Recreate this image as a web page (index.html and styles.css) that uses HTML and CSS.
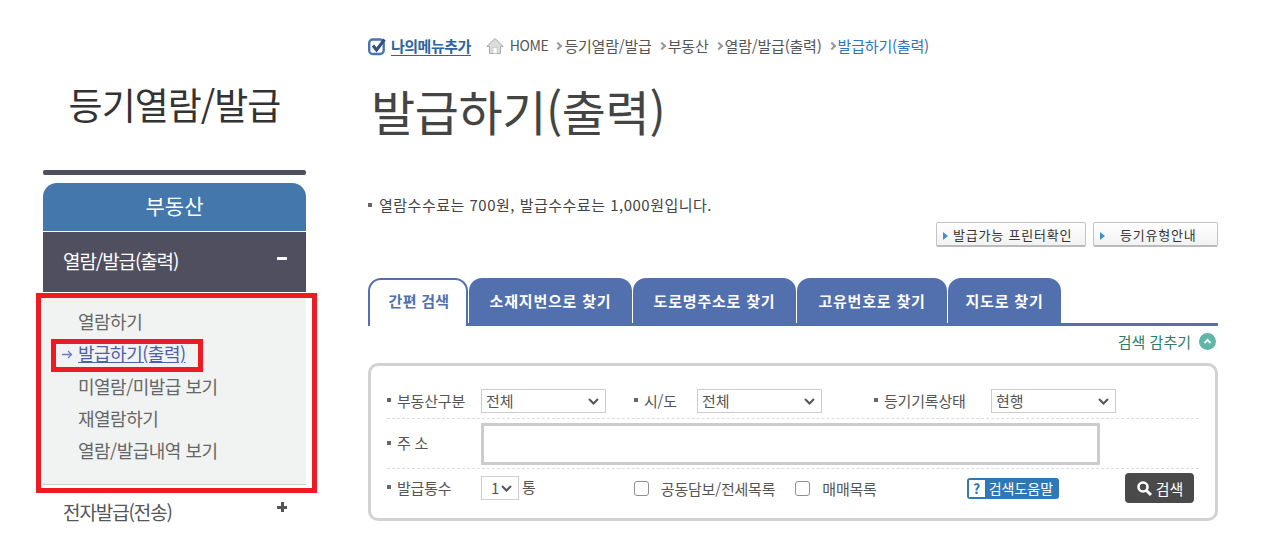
FILE: index.html
```html
<!DOCTYPE html>
<html lang="ko">
<head>
    <meta charset="UTF-8">
    <meta name="viewport" content="width=device-width, initial-scale=1.0">
    <title>발급하기(출력)</title>
    <link rel="stylesheet" href="styles.css">
</head>
<body>
    <div class="wrap">
        <div class="side">
            <h2 class="sideTitle">등기열람/발급</h2>
            <div class="sideBar"></div>
            <div class="sideHead">부동산</div>
            <div class="sideMenu">
                <span>열람/발급(출력)</span>
                <span class="minus"></span>
            </div>
            <ul class="subMenu">
                <li>열람하기</li>
                <li class="on">
                    <svg class="arrow" width="11" height="9" viewBox="0 0 11 9">
                        <path d="M0 4.500h9.500M6 1l3.500 3.500L6 8" fill="none" stroke="#6c7cc0" stroke-width="1.300"/>
                    </svg>
                    <a href="#">발급하기(출력)</a>
                </li>
                <li>미열람/미발급 보기</li>
                <li>재열람하기</li>
                <li>열람/발급내역 보기</li>
            </ul>
            <div class="sideNext">
                <span>전자발급(전송)</span>
                <span class="plus"></span>
            </div>
            <div class="redBox outer"></div>
            <div class="redBox inner"></div>
        </div>

        <div class="main">
            <div class="crumbs">
                <a class="myMenu" href="#">
                    <svg width="19" height="19" viewBox="0 0 19 19">
                        <rect x="1.200" y="2.500" width="14.500" height="14.500" rx="3.500" fill="#fff" stroke="#4a76b0" stroke-width="2.400"/>
                        <path d="M5 8.500l3.500 4.500L16.500 2.500" fill="none" stroke="#2f4f8a" stroke-width="3"/>
                    </svg>
                    <span>나의메뉴추가</span>
                </a>
                <svg class="home" width="18" height="18" viewBox="0 0 18 18">
                    <path d="M.8 9.500L9 1.500l8.200 8h-2.700v7h-11v-7z" fill="#dcdcdc" stroke="#a9a9a9"/>
                    <rect x="7" y="10.500" width="4" height="6" fill="#fff" stroke="#b5b5b5" stroke-width="0.500"/>
                </svg>
                <span class="crumb homeText">HOME</span>
                <span class="gt"></span><span class="crumb">등기열람/발급</span>
                <span class="gt"></span><span class="crumb">부동산</span>
                <span class="gt"></span><span class="crumb">열람/발급(출력)</span>
                <span class="gt"></span><span class="crumb now">발급하기(출력)</span>
            </div>

            <h1 class="pageTitle">발급하기(출력)</h1>

            <p class="notice"><span class="dot"></span>열람수수료는 700원, 발급수수료는 1,000원입니다.</p>

            <div class="btnRow">
                <button class="smallBtn first"><span class="tri"></span>발급가능 프린터확인</button>
                <button class="smallBtn second"><span class="tri"></span>등기유형안내</button>
            </div>

            <div class="tabs">
                <div class="tab active">간편 검색</div>
                <div class="tab t2">소재지번으로 찾기</div>
                <div class="tab t2">도로명주소로 찾기</div>
                <div class="tab t3">고유번호로 찾기</div>
                <div class="tab t4">지도로 찾기</div>
            </div>

            <div class="hideRow">
                <span>검색 감추기</span>
                <span class="upBtn">
                    <svg width="17" height="17" viewBox="0 0 17 17">
                        <circle cx="8.500" cy="8.500" r="8.500" fill="#5fb6a6"/>
                        <path d="M5.500 10l3-3 3 3" fill="none" stroke="#fff" stroke-width="2"/>
                    </svg>
                </span>
            </div>

            <div class="searchBox">
                <div class="row row1">
                    <label class="lbl l1"><span class="dot"></span>부동산구분</label>
                    <select class="sel big"><option>전체</option></select>
                    <label class="lbl l2"><span class="dot"></span>시/도</label>
                    <select class="sel big"><option>전체</option></select>
                    <label class="lbl l3"><span class="dot"></span>등기기록상태</label>
                    <select class="sel big"><option>현행</option></select>
                </div>
                <div class="row row2">
                    <label class="lbl l1"><span class="dot"></span>주 소</label>
                    <input class="addr" type="text">
                </div>
                <div class="row row3">
                    <label class="lbl l1"><span class="dot"></span>발급통수</label>
                    <select class="sel tiny"><option>1</option></select>
                    <span class="unit">통</span>
                    <label class="chk c1"><input type="checkbox"><span>공동담보/전세목록</span></label>
                    <label class="chk c2"><input type="checkbox"><span>매매목록</span></label>
                    <span class="help"><b>?</b>검색도움말</span>
                    <button class="searchBtn">
                        <svg width="17" height="17" viewBox="0 0 17 17">
                            <circle cx="7" cy="7" r="4.500" fill="none" stroke="#fff" stroke-width="2.600"/>
                            <path d="M10.500 10.500l4.500 4.500" stroke="#fff" stroke-width="3"/>
                        </svg>
                        검색
                    </button>
                </div>
            </div>
        </div>
    </div>
</body>
</html>
```

FILE: styles.css
```css
* {
    box-sizing: border-box;
    margin: 0;
    padding: 0;
}

html, body {
    height: 535px;
    overflow: hidden;
}

body {
    background-color: white;
    font-family: "Noto Sans CJK KR", "Noto Sans", sans-serif;
    color: #555;
}

.wrap {
    display: flex;
    padding-left: 43px;
}

/* left side */
.side {
    position: relative;
    width: 263px;
    margin-right: 62px;
    flex-shrink: 0;
}

.sideTitle {
    height: 170px;
    padding-top: 77px;
    text-align: center;
    font-size: 37px;
    line-height: 54px;
    font-weight: normal;
    color: #333;
    letter-spacing: -1px;
    white-space: nowrap;
}

.sideBar {
    height: 5px;
    background-color: #504f60;
    border-radius: 2px;
}

.sideHead {
    height: 48px;
    margin-top: 8px;
    background-color: #4477ab;
    border-radius: 14px 14px 0 0;
    color: white;
    text-align: center;
    font-size: 21px;
    line-height: 44px;
}

.sideMenu {
    height: 60px;
    margin-top: 1px;
    padding: 0 19px 3px 20px;
    background-color: #504f60;
    color: white;
    display: flex;
    justify-content: space-between;
    align-items: center;
    font-size: 19px;
    letter-spacing: -1.1px;
}

.minus {
    width: 10px;
    height: 3px;
    margin-bottom: 4px;
    background-color: white;
}

.subMenu {
    height: 192px;
    margin-top: 1px;
    padding-top: 12px;
    list-style: none;
    background-color: #f1f3f2;
    border-bottom: 1px solid #ccc;
}

.subMenu li {
    height: 32.250px;
    padding-left: 35px;
    font-size: 18px;
    line-height: 32px;
    color: #666;
    letter-spacing: -0.5px;
    position: relative;
}

.subMenu .on a {
    color: #4f5fa8;
}

.arrow {
    position: absolute;
    left: 19px;
    top: 13px;
}

.sideNext {
    padding: 12px 19px 0 20px;
    display: flex;
    justify-content: space-between;
    font-size: 19px;
    line-height: 30px;
    letter-spacing: -1.1px;
    color: #555;
}

/* plus sign drawn from two bars */
.plus {
    width: 10px;
    height: 10px;
    margin-top: 5px;
    background:
        linear-gradient(#555, #555) center / 10px 3px no-repeat,
        linear-gradient(#555, #555) center / 3px 10px no-repeat;
}

.redBox {
    position: absolute;
    border: 5px solid #ed1c24;
}

.outer {
    left: -7px;
    top: 293px;
    width: 281px;
    height: 200px;
}

.inner {
    left: 8px;
    top: 339px;
    width: 152px;
    height: 33px;
}

/* main */
.main {
    width: 850px;
    flex-shrink: 0;
}

.crumbs {
    display: flex;
    align-items: center;
    height: 40px;
    margin-top: 26px;
    font-size: 15px;
    color: #555;
    letter-spacing: -0.2px;
}

.crumb {
    padding-bottom: 2px;
}

.myMenu {
    display: flex;
    align-items: center;
    gap: 4px;
    margin-right: 15px;
    color: #2f64a0;
    font-weight: bold;
    text-decoration: none;
    letter-spacing: -0.5px;
}

.myMenu span {
    border-bottom: 1px solid #2f64a0;
    line-height: 19px;
}

.home {
    margin-right: 6px;
}

.homeText {
    font-size: 14px;
    letter-spacing: -0.4px;
}

.gt {
    width: 6px;
    height: 6px;
    margin: 0 3px 0 7px;
    border-top: 2px solid #999;
    border-right: 2px solid #999;
    transform: rotate(45deg);
}

.now {
    color: #2f74c0;
}

.pageTitle {
    height: 90px;
    padding-left: 3px;
    font-size: 48px;
    line-height: 88px;
    font-weight: normal;
    color: #444;
    letter-spacing: -0.4px;
}

.notice {
    margin-top: 37px;
    height: 24px;
    font-size: 15px;
    line-height: 24px;
    color: #444;
    letter-spacing: 0.5px;
    display: flex;
    align-items: center;
}

.dot {
    display: inline-block;
    width: 4px;
    height: 4px;
    margin-right: 6px;
    background-color: #666;
    flex-shrink: 0;
}

.notice .dot {
    margin-right: 7px;
}

.btnRow {
    display: flex;
    justify-content: flex-end;
    gap: 7px;
    margin-top: 5px;
}

.smallBtn {
    height: 25px;
    border: 1px solid #c4c4c4;
    border-bottom: 2px solid #bbb;
    border-radius: 2px;
    background: linear-gradient(white, #f2f2f2);
    font-family: inherit;
    font-size: 13px;
    color: #333;
    text-align: left;
    letter-spacing: 0.8px;
}

.first {
    width: 150px;
    padding-left: 6px;
}

.second {
    width: 125px;
    padding-left: 6px;
}

.second .tri {
    margin-right: 15px;
}

.tri {
    display: inline-block;
    width: 0;
    height: 0;
    margin-right: 5px;
    border-left: 5px solid #3f8fd0;
    border-top: 4px solid transparent;
    border-bottom: 4px solid transparent;
}

.tabs {
    display: flex;
    gap: 1px;
    height: 48px;
    margin-top: 31px;
    border-bottom: 3px solid #526fae;
}

.tab {
    height: 45px;
    border-radius: 13px 13px 0 0;
    background-color: #526fae;
    color: white;
    font-size: 15px;
    font-weight: bold;
    line-height: 45px;
    letter-spacing: 0.8px;
    text-align: center;
}

.tab.active {
    width: 100px;
    height: 48px;
    padding-left: 2px;
    background-color: white;
    border: 2px solid #526fae;
    border-bottom: none;
    color: #526fae;
    line-height: 42px;
    letter-spacing: 0.3px;
}

.t2 {
    width: 163px;
}

.t3 {
    width: 150px;
}

.t4 {
    width: 113px;
}

.hideRow {
    display: flex;
    justify-content: flex-end;
    align-items: center;
    gap: 8px;
    height: 30px;
    padding-right: 2px;
    font-size: 15px;
    color: #2f7a66;
}

.upBtn {
    display: flex;
}

.searchBox {
    height: 158px;
    margin-top: 7px;
    padding: 14px 16px 0 16px;
    border: 3px solid #d2d2d2;
    border-radius: 10px;
}

.row {
    display: flex;
    align-items: center;
    font-size: 15px;
    color: #555;
}

.row1 {
    height: 39px;
    padding-top: 4px;
    border-bottom: 1px dashed #ddd;
}

.row2 {
    height: 50px;
    border-bottom: 1px dashed #ddd;
}

.row3 {
    height: 38px;
}

.lbl {
    display: flex;
    align-items: center;
    flex-shrink: 0;
    margin-bottom: 2px;
    letter-spacing: -0.2px;
}

.lbl.l1 {
    width: 94px;
}

.lbl.l2 {
    width: 63px;
    margin-left: 28px;
}

.lbl.l3 {
    width: 117px;
    margin-left: 52px;
}

.sel {
    height: 24px;
    appearance: none;
    background-color: white;
    background-image: url("data:image/svg+xml,%3Csvg xmlns='http://www.w3.org/2000/svg' width='11' height='7'%3E%3Cpath d='M1 1l4.500 4.500L10 1' fill='none' stroke='%23555' stroke-width='2'/%3E%3C/svg%3E");
    background-repeat: no-repeat;
    background-position: right 6px center;
    border: 1px solid #ccc;
    border-radius: 0;
    padding-bottom: 2px;
    font-family: inherit;
    font-size: 15px;
    color: #555;
}

.big {
    width: 125px;
    padding-left: 4px;
}

.tiny {
    width: 38px;
    padding-left: 9px;
}

.addr {
    width: 619px;
    height: 42px;
    border: 3px solid #ccc;
}

.unit {
    margin-left: 3px;
    margin-bottom: 4px;
}

.chk {
    display: flex;
    align-items: center;
}

.chk input {
    appearance: none;
    width: 15px;
    height: 15px;
    border: 1.500px solid #8f8f8f;
    border-radius: 3px;
    background-color: white;
}

.chk span {
    margin-left: 12px;
    letter-spacing: -0.2px;
}

.c1 {
    margin-left: 98px;
}

.c2 {
    margin-left: 20px;
}

.help {
    display: flex;
    align-items: center;
    width: 92px;
    height: 21px;
    margin-left: 90px;
    padding-left: 2px;
    background-color: #2f78b5;
    border-radius: 3px;
    color: white;
    font-size: 14px;
    white-space: nowrap;
}

.help b {
    width: 16px;
    height: 17px;
    margin-right: 4px;
    background-color: white;
    color: #2f78b5;
    text-align: center;
    font-size: 14px;
    line-height: 17px;
}

.searchBtn {
    display: flex;
    align-items: center;
    justify-content: center;
    gap: 3px;
    width: 69px;
    height: 30px;
    margin-left: auto;
    margin-right: 5px;
    border: none;
    border-radius: 4px;
    background-color: #4a4a4a;
    color: white;
    font-family: inherit;
    font-size: 15px;
}
```
